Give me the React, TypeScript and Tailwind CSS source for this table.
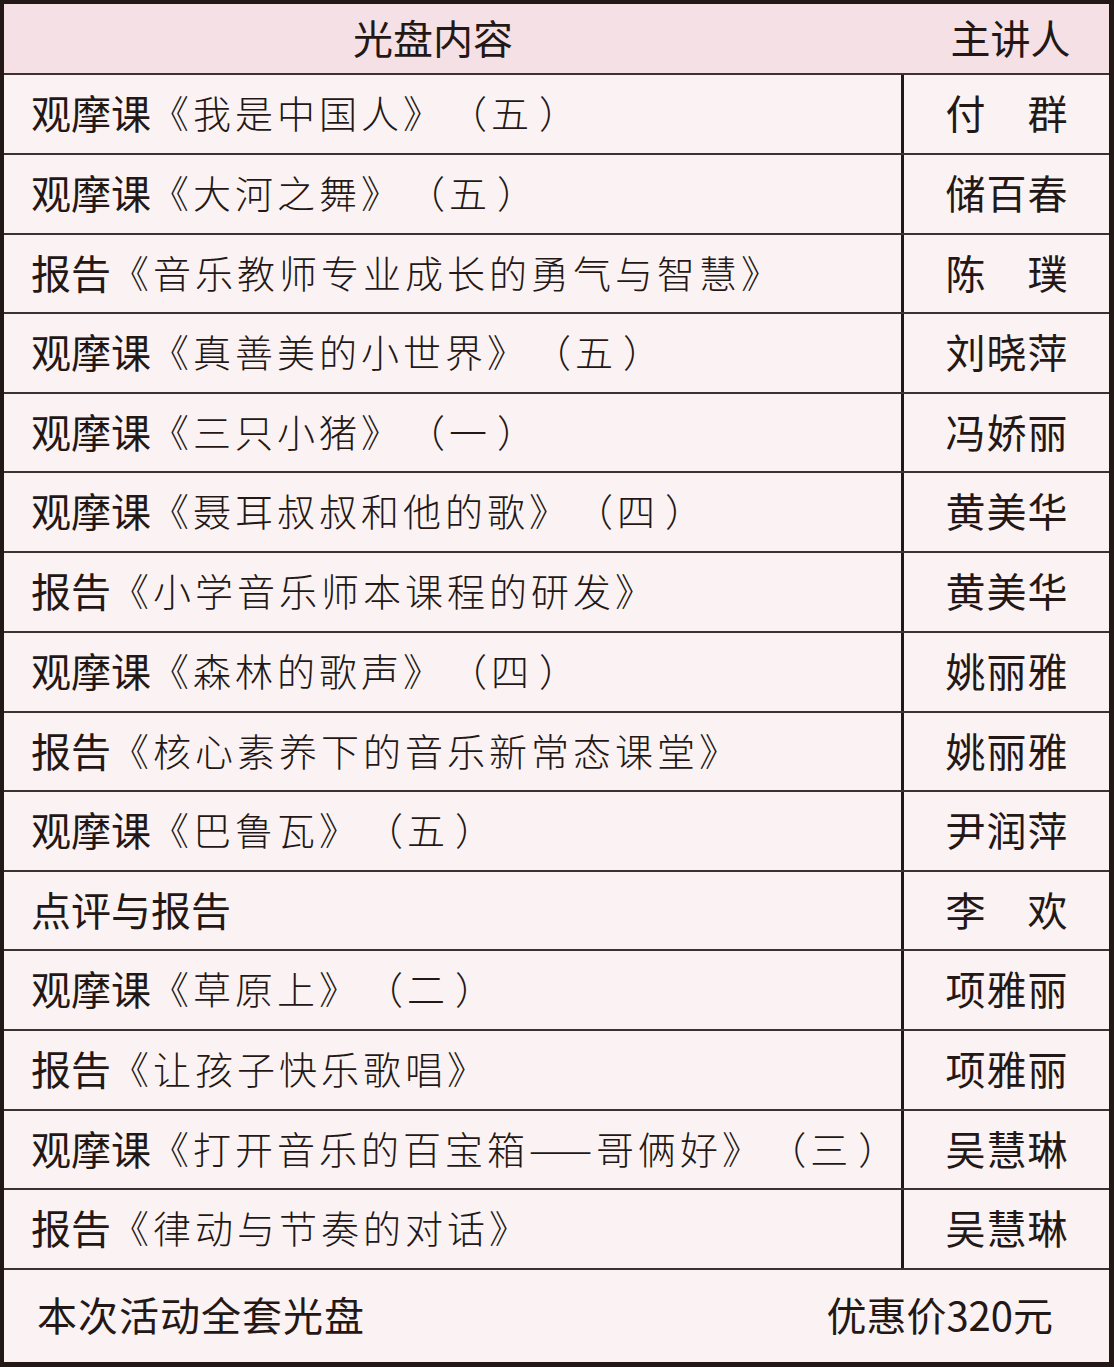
import React from "react";

type Row = { prefix: string; title?: string; num?: string; speaker: string[]; h: string };

const rows: Row[] = [
  { prefix: "观摩课", title: "《我是中国人》", num: "五", speaker: ["付", "群"], h: "h-[80px]" },
  { prefix: "观摩课", title: "《大河之舞》", num: "五", speaker: ["储", "百", "春"], h: "h-[80px]" },
  { prefix: "报告", title: "《音乐教师专业成长的勇气与智慧》", speaker: ["陈", "璞"], h: "h-[79px]" },
  { prefix: "观摩课", title: "《真善美的小世界》", num: "五", speaker: ["刘", "晓", "萍"], h: "h-[80px]" },
  { prefix: "观摩课", title: "《三只小猪》", num: "一", speaker: ["冯", "娇", "丽"], h: "h-[79px]" },
  { prefix: "观摩课", title: "《聂耳叔叔和他的歌》", num: "四", speaker: ["黄", "美", "华"], h: "h-[80px]" },
  { prefix: "报告", title: "《小学音乐师本课程的研发》", speaker: ["黄", "美", "华"], h: "h-[80px]" },
  { prefix: "观摩课", title: "《森林的歌声》", num: "四", speaker: ["姚", "丽", "雅"], h: "h-[80px]" },
  { prefix: "报告", title: "《核心素养下的音乐新常态课堂》", speaker: ["姚", "丽", "雅"], h: "h-[79px]" },
  { prefix: "观摩课", title: "《巴鲁瓦》", num: "五", speaker: ["尹", "润", "萍"], h: "h-[80px]" },
  { prefix: "点评与报告", speaker: ["李", "欢"], h: "h-[79px]" },
  { prefix: "观摩课", title: "《草原上》", num: "二", speaker: ["项", "雅", "丽"], h: "h-[80px]" },
  { prefix: "报告", title: "《让孩子快乐歌唱》", speaker: ["项", "雅", "丽"], h: "h-[80px]" },
  { prefix: "观摩课", title: "《打开音乐的百宝箱——哥俩好》", num: "三", speaker: ["吴", "慧", "琳"], h: "h-[79px]" },
  { prefix: "报告", title: "《律动与节奏的对话》", speaker: ["吴", "慧", "琳"], h: "h-[80px]" },
];

export default function App() {
  return (
    <div
      className="w-[1114px] h-[1367px] bg-[#fbf2f3] border-[#231815] border-l-4 border-t-4 border-r-[5px] border-b-[5px] flex flex-col text-[#231815] [text-spacing-trim:space-all]"
      style={{ fontFamily: '"Noto Sans CJK SC", "Noto Sans", sans-serif' }}
    >
      {/* header */}
      <div className="h-[69px] shrink-0 bg-[#f5e0e5] flex items-center pb-[3px]">
        <div className="w-[900px] flex justify-center pr-[42px] text-[40px] leading-none">光盘内容</div>
        <div className="flex-1 flex justify-center pl-[8px] text-[40px] leading-none">主讲人</div>
      </div>
      {rows.map((r, i) => (
        <div key={i} className={`${r.h} shrink-0 box-border border-t-2 border-[#3b3232] flex`}>
          <div className="w-[900px] shrink-0 border-r-[3px] border-[#231815] flex items-center pl-[27px] pb-[4px] whitespace-nowrap leading-none">
            <span className="text-[40px]">{r.prefix}</span>
            {r.title && (
              <span className="text-[38px] font-light tracking-[4px]">{r.title}</span>
            )}
            {r.num && (
              <span className="text-[38px] font-light tracking-[4px] ml-[4px]">
                （<span className="mr-[6px]">{r.num}</span>）
              </span>
            )}
          </div>
          <div className="flex-1 flex items-center justify-center pb-[4px]">
            <div className="w-[122px] flex justify-between text-[40px] leading-none">
              {r.speaker.map((c, j) => (
                <span key={j}>{c}</span>
              ))}
            </div>
          </div>
        </div>
      ))}
      {/* footer */}
      <div className="flex-1 border-t-2 border-[#3b3232] flex items-center justify-between pl-[33px] pr-[56px] pb-[4px] text-[40px] leading-none">
        <span className="tracking-[1px]">本次活动全套光盘</span>
        <span>优惠价320元</span>
      </div>
    </div>
  );
}
